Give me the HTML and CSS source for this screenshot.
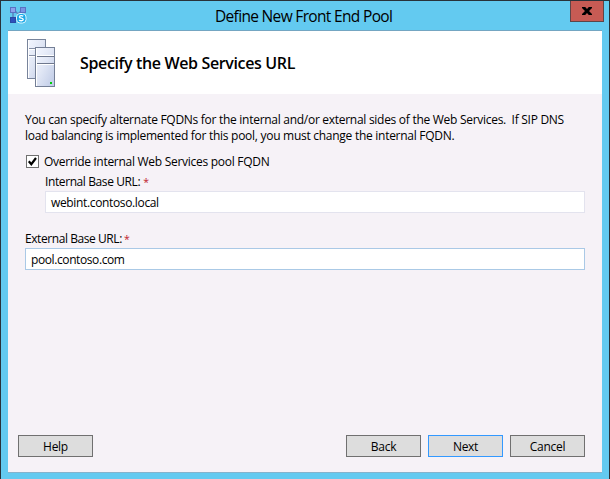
FILE: index.html
```html
<!DOCTYPE html>
<html lang="en">
<head>
<meta charset="utf-8">
<title>Define New Front End Pool</title>
<link rel="stylesheet" href="styles.css">
</head>
<body>
<div class="window">
  <header class="titlebar">
    <svg class="app-icon" width="18" height="18" viewBox="0 0 18 18">
      <path d="M4 5v9M5 4l4 4 4-4" fill="none" stroke="#5b83bd" stroke-width="1.5"/>
      <rect x="1.5" y="1.5" width="5" height="5" fill="#8ba2ec" stroke="#5872c4"/>
      <rect x="11.5" y="1.5" width="5" height="5" fill="#7894e4" stroke="#5872c4"/>
      <rect x="1.5" y="11.5" width="5" height="5" fill="#2d51bd" stroke="#2949a5"/>
      <rect x="7.500" y="7.500" width="9.500" height="9.500" rx="3.5" fill="#1ba9e8" stroke="#d9f4ff"/>
      <path d="M14.200 10.300C13 9.200 10.500 9.400 10.500 10.900 10.500 12.500 14.200 11.800 14.200 13.500 14.200 15 11.300 15.200 10.200 14" fill="none" stroke="#fff" stroke-width="1.400"/>
    </svg>
    <h1 class="title"><span>Define New Front End Pool</span></h1>
    <button class="close" aria-label="Close">
      <svg width="10" height="8" viewBox="0 0 10 8"><path d="M0 0h3.2L5 2 6.8 0H10v1L7 4l3 3v1H6.8L5 6 3.2 8H0V7l3-3-3-3z" fill="#000"/></svg>
    </button>
  </header>
  <main class="dialog">
    <div class="banner">
      <svg class="servers" width="30" height="50" viewBox="0 0 30 50">
        <defs><linearGradient id="face" x1="0" y1="0" x2="1" y2="1"><stop offset="0" stop-color="#f4f7ff"/><stop offset=".45" stop-color="#e1e7f5"/><stop offset="1" stop-color="#bdc9e5"/></linearGradient></defs>
        <rect x="1.5" y="1.5" width="18" height="39" fill="url(#face)" stroke="#78849b"/>
        <path d="M2 10.500h17M2 17.500h17" stroke="#8690a6"/>
        <path d="M2 11.500h17M2 18.500h17M2.500 2v38" stroke="#fff"/>
        <rect x="9.500" y="9.500" width="19" height="39" fill="url(#face)" stroke="#747f96"/>
        <path d="M10 18.500h18M10 25.500h18" stroke="#6f788d"/>
        <path d="M10 17.500h18M10 26.500h18M10.500 10v38" stroke="#fff"/>
        <rect x="24" y="44" width="2" height="2" fill="#00d00b"/>
      </svg>
      <h2 class="heading"><span>Specify the Web Services URL</span></h2>
    </div>
    <div class="content">
      <p class="intro"><span class="line-a">You can specify alternate FQDNs for the internal and/or external sides of the Web Services.&nbsp; If SIP DNS</span><br><span class="line-b">load balancing is implemented for this pool, you must change the internal FQDN.</span></p>
      <div class="option">
        <span class="box"><svg width="11" height="11" viewBox="0 0 11 11"><path d="M1.800 5.300L4.300 8.200 9 2" fill="none" stroke="#000" stroke-width="2.200"/></svg></span>
        <span class="option-text">Override internal Web Services pool FQDN</span>
      </div>
      <div class="field internal">
        <div class="label"><span class="name">Internal Base URL:</span><span class="star">*</span></div>
        <div class="input"><span class="value-int">webint.contoso.local</span></div>
      </div>
      <div class="field external">
        <div class="label"><span class="name-ext">External Base URL:</span><span class="star">*</span></div>
        <div class="input active"><span class="value-ext">pool.contoso.com</span></div>
      </div>
    </div>
    <footer class="actions">
      <button class="btn help">Help</button>
      <button class="btn">Back</button>
      <button class="btn primary">Next</button>
      <button class="btn">Cancel</button>
    </footer>
  </main>
</div>
</body>
</html>
```
FILE: styles.css
```css
* { box-sizing: border-box; }
body { margin: 0; font: 12px/16px "Open Sans", sans-serif; color: #000; }
h1, h2, p { margin: 0; }
svg { display: block; }
span { white-space: nowrap; }
.window { width: 610px; height: 479px; border: 1px solid #28323a; border-bottom: 0; background: #63caf0; padding: 0 7px 6px 7px; display: flex; flex-direction: column; }
.titlebar { height: 29px; display: flex; align-items: flex-start; }
.app-icon { margin: 5px 0 0 1px; }
.title { flex: 1; font-size: 15.5px; font-weight: 400; line-height: 30px; padding-left: 188px; letter-spacing: -0.67px; }
.close { width: 34px; height: 21px; margin-right: -2px; padding: 0; border: 1px solid #5d4548; border-top: 0; background: #c75b54; display: flex; align-items: center; justify-content: center; }
.dialog { width: 594px; flex: 1; background: #f6f2f7; border-top: 1px solid #74a6c2; border-bottom: 1px solid #85b3cc; display: flex; flex-direction: column; }
.banner { height: 63px; background: #fff; display: flex; align-items: flex-start; padding: 7px 0 0 18px; }
.heading { margin: 13px 0 0 24px; font-size: 16px; line-height: 24px; font-weight: 600; letter-spacing: -0.36px; }
.content { flex: 1; padding: 18px 17px 0; }
.intro { line-height: 16px; }
.line-a { letter-spacing: -0.283px; }
.line-b { letter-spacing: -0.274px; }
.option { display: flex; align-items: center; gap: 5px; margin: 9px 0 0 1px; height: 16px; }
.box { width: 13px; height: 13px; border: 1px solid #707070; background: #fff; }
.option-text { letter-spacing: -0.28px; padding-top: 1px; }
.name { letter-spacing: -0.4px; }
.name-ext { letter-spacing: -0.43px; }
.value-int { letter-spacing: -0.35px; }
.value-ext { letter-spacing: -0.4px; }
.internal { margin: 5px 0 0 20px; }
.external { margin-top: 18px; }
.label { height: 17px; display: flex; gap: 3px; }
.star { color: #c0202c; font-size: 10.5px; }
.external .label { gap: 2px; }
.input { height: 22px; border: 1px solid #e3e3ee; background: #fff; padding: 3px 5px 0; }
.input.active { border-color: #aac9e6; }
.actions { height: 37px; padding: 0 17px 0 10px; display: flex; gap: 7px; }
.btn { width: 75px; height: 22px; padding: 1px 0 0; border: 1px solid #707070; background: #dddddd; font: 12px/18px "Open Sans", sans-serif; letter-spacing: -0.3px; color: #000; }
.primary { border-color: #3399ff; }
.help { margin-right: auto; }
```
